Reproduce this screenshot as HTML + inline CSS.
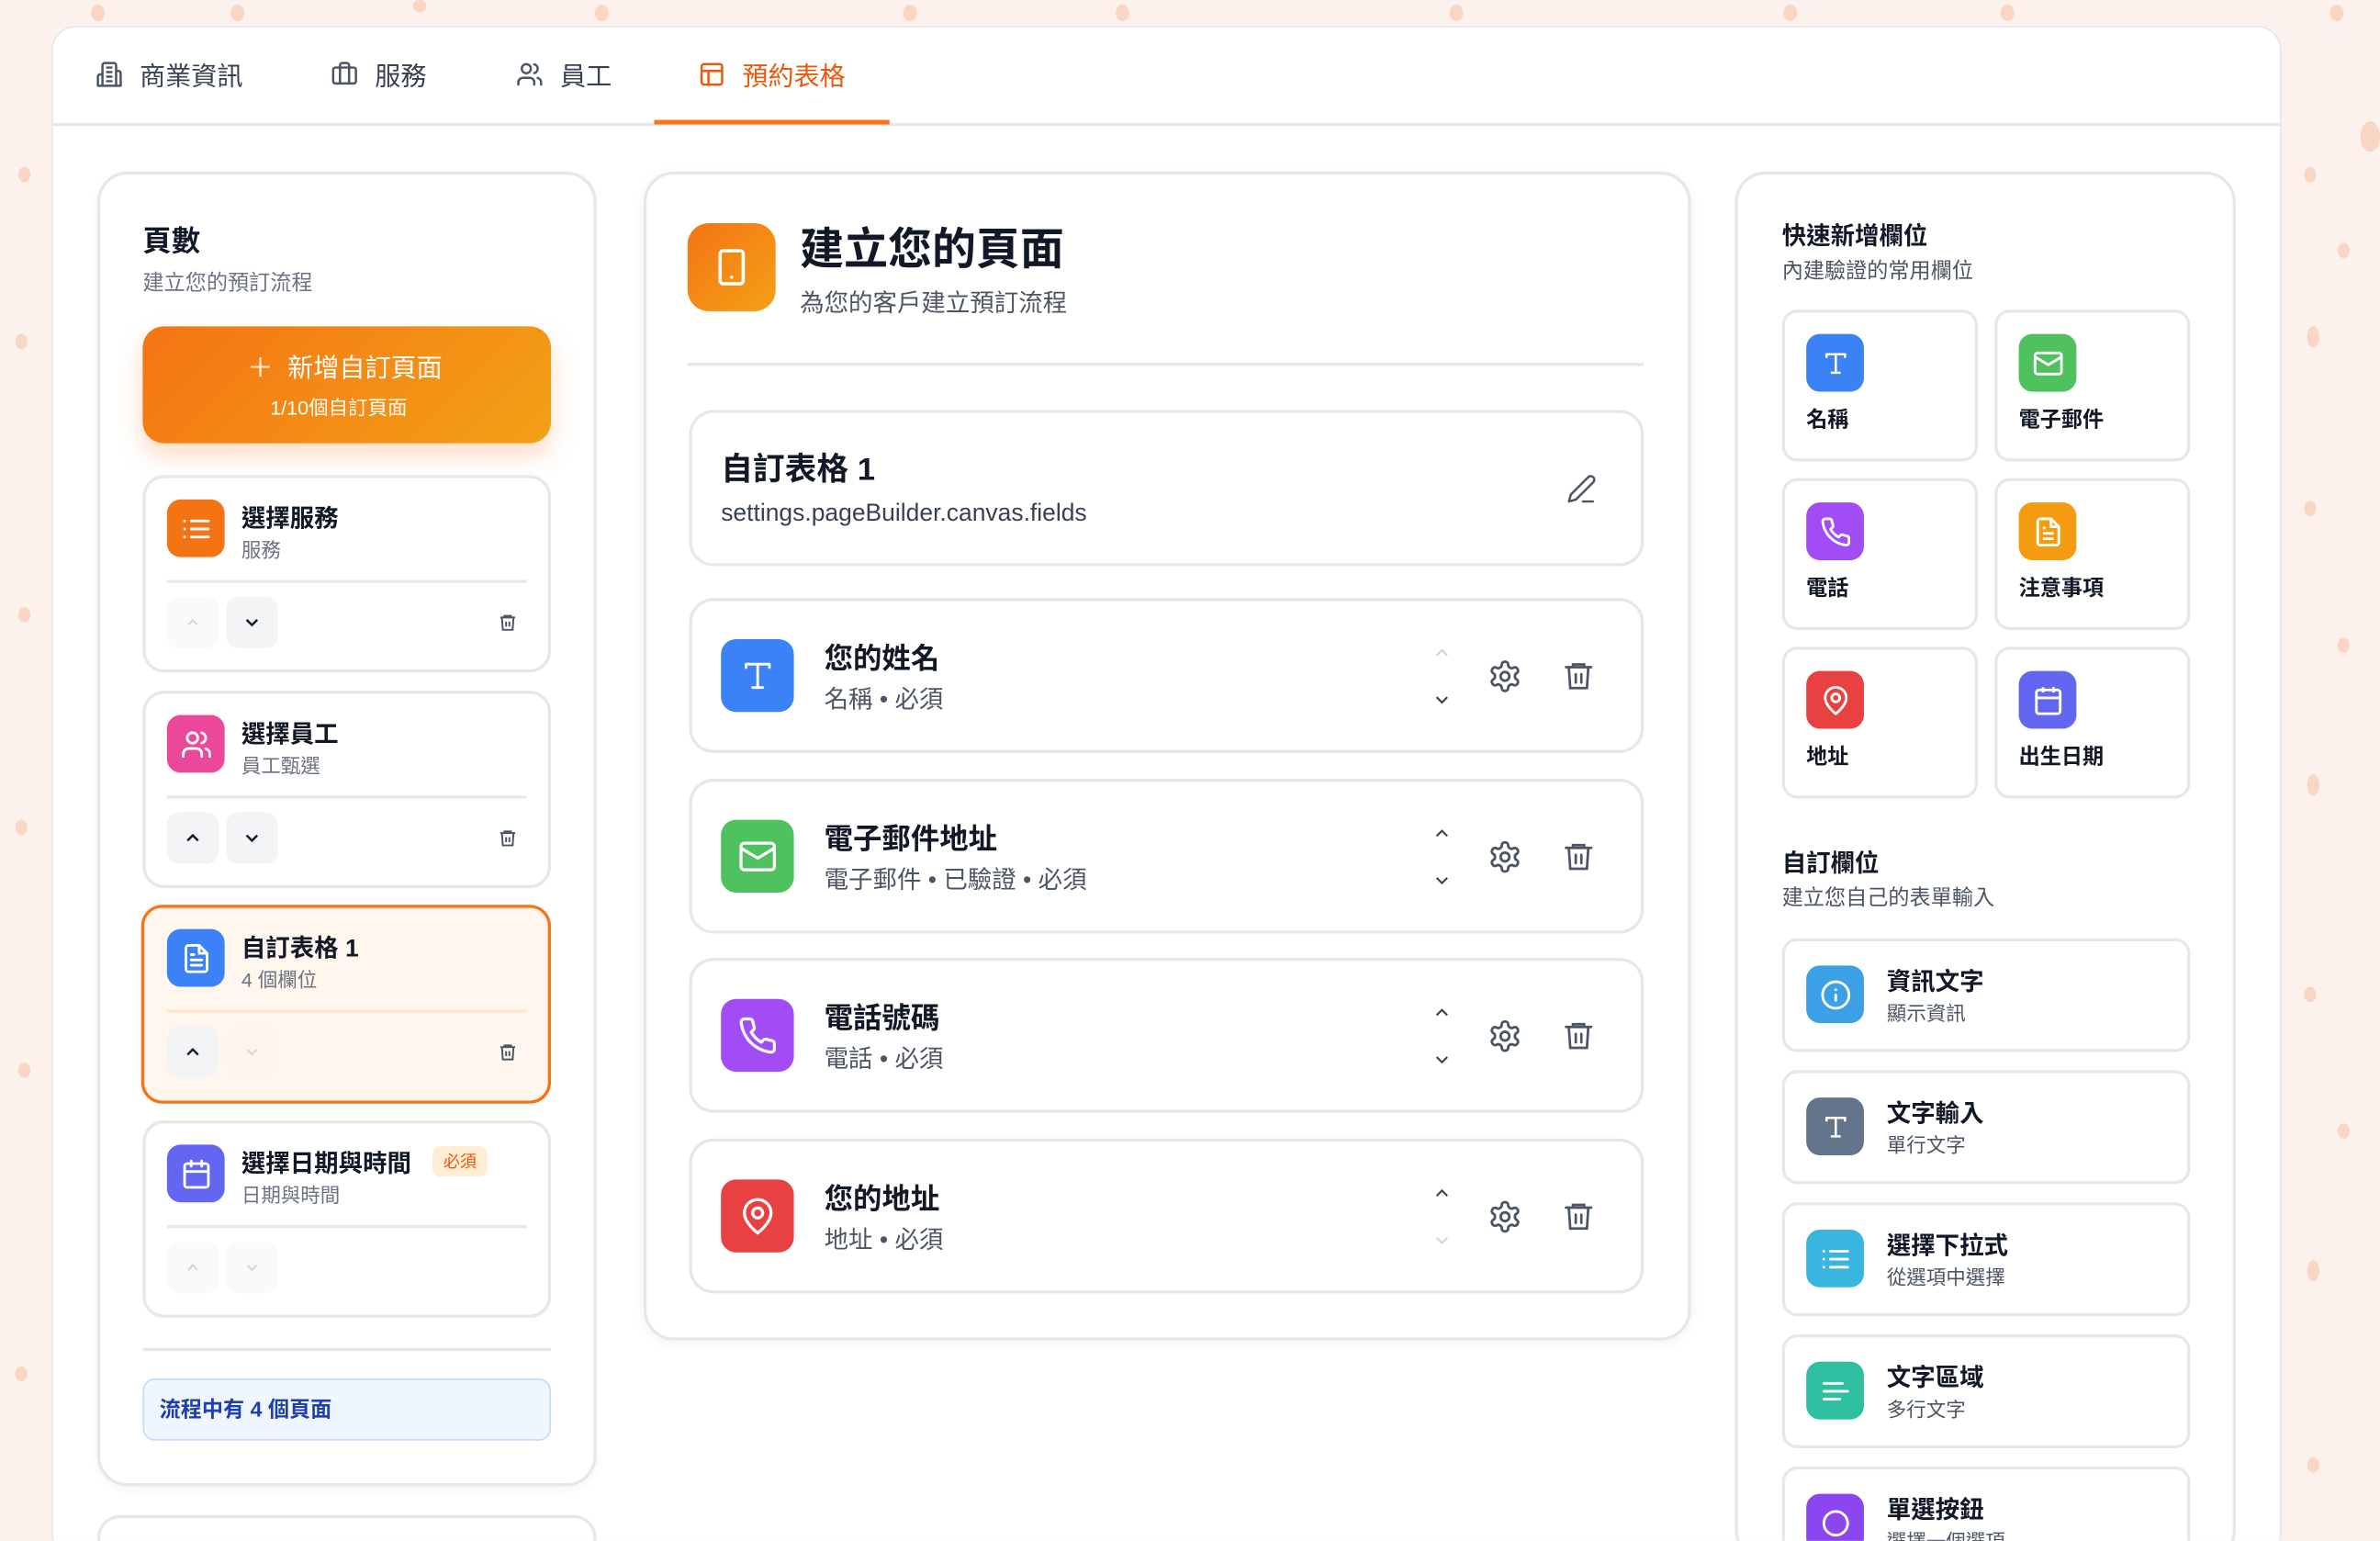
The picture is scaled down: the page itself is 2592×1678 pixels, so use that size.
<!DOCTYPE html>
<html><head><meta charset="utf-8">
<style>
*{box-sizing:border-box;margin:0;padding:0}
html,body{width:2592px;height:1678px;overflow:hidden;background:#fdf1ee}
body{font-family:"Liberation Sans","Noto Sans CJK TC",sans-serif;color:#111827}
#w{position:absolute;left:0;top:0;width:1568px;height:1015px;transform:scale(1.65306);transform-origin:0 0;overflow:hidden;background:#fdf1ee}
.a{position:absolute}
.dot{position:absolute;border-radius:50%;background:#f6c9b0;opacity:.7}
.card{position:absolute;background:#fff;border:2px solid #e5e7eb;border-radius:16px}
.ic{position:absolute;border-radius:9px;display:flex;align-items:center;justify-content:center}
.ic svg{width:55%;height:55%}
.t{position:absolute;white-space:nowrap;margin-top:-2px}
.b{font-weight:bold}
.g{color:#6b7280}
.sb{position:absolute;width:34px;height:34px;border-radius:8px;background:#f3f4f6;display:flex;align-items:center;justify-content:center}
</style></head><body><div id="w">
<div class="dot" style="left:60px;top:3px;width:9px;height:11px"></div>
<div class="dot" style="left:152px;top:3px;width:9px;height:11px"></div>
<div class="dot" style="left:272px;top:0px;width:9px;height:8px"></div>
<div class="dot" style="left:392px;top:3px;width:9px;height:11px"></div>
<div class="dot" style="left:595px;top:3px;width:9px;height:11px"></div>
<div class="dot" style="left:735px;top:3px;width:9px;height:11px"></div>
<div class="dot" style="left:955px;top:3px;width:9px;height:11px"></div>
<div class="dot" style="left:1175px;top:3px;width:9px;height:11px"></div>
<div class="dot" style="left:1318px;top:3px;width:9px;height:11px"></div>
<div class="dot" style="left:1535px;top:3px;width:9px;height:11px"></div>
<div class="dot" style="left:12px;top:110px;width:8px;height:10px"></div>
<div class="dot" style="left:10px;top:220px;width:8px;height:10px"></div>
<div class="dot" style="left:12px;top:400px;width:8px;height:10px"></div>
<div class="dot" style="left:10px;top:540px;width:8px;height:10px"></div>
<div class="dot" style="left:12px;top:700px;width:8px;height:10px"></div>
<div class="dot" style="left:10px;top:900px;width:8px;height:10px"></div>
<div class="dot" style="left:1518px;top:110px;width:8px;height:10px"></div>
<div class="dot" style="left:1520px;top:215px;width:8px;height:14px"></div>
<div class="dot" style="left:1540px;top:160px;width:8px;height:10px"></div>
<div class="dot" style="left:1555px;top:80px;width:13px;height:20px"></div>
<div class="dot" style="left:1518px;top:330px;width:8px;height:10px"></div>
<div class="dot" style="left:1520px;top:510px;width:8px;height:14px"></div>
<div class="dot" style="left:1540px;top:420px;width:8px;height:10px"></div>
<div class="dot" style="left:1518px;top:650px;width:8px;height:10px"></div>
<div class="dot" style="left:1520px;top:830px;width:8px;height:14px"></div>
<div class="dot" style="left:1540px;top:740px;width:8px;height:10px"></div>
<div class="dot" style="left:1520px;top:960px;width:8px;height:10px"></div>

<div class="a" style="left:34px;top:17px;width:1469px;height:1010px;background:#fff;border:1.5px solid #e5e7eb;border-radius:16px"></div>
<div class="a" style="left:35px;top:81px;width:1467px;height:1.5px;background:#e5e7eb"></div>
<svg class="a" style="left:63px;top:40px" width="18" height="18" viewBox="0 0 24 24" fill="none" stroke="#4b5563" stroke-width="2" stroke-linecap="round" stroke-linejoin="round"><path d="M6 22V4a2 2 0 0 1 2-2h8a2 2 0 0 1 2 2v18z"/><path d="M6 12H4a2 2 0 0 0-2 2v8h4M18 9h2a2 2 0 0 1 2 2v11h-4M10 6h4M10 10h4M10 14h4M10 18h4"/></svg>
<div class="t" style="left:92px;top:38px;font-size:17px;color:#374151">商業資訊</div>
<svg class="a" style="left:218px;top:40px" width="18" height="18" viewBox="0 0 24 24" fill="none" stroke="#4b5563" stroke-width="2" stroke-linecap="round" stroke-linejoin="round"><path d="M16 20V4a2 2 0 0 0-2-2h-4a2 2 0 0 0-2 2v16"/><rect x="2" y="6" width="20" height="14" rx="2"/></svg>
<div class="t" style="left:247px;top:38px;font-size:17px;color:#374151">服務</div>
<svg class="a" style="left:340px;top:40px" width="18" height="18" viewBox="0 0 24 24" fill="none" stroke="#4b5563" stroke-width="2" stroke-linecap="round" stroke-linejoin="round"><path d="M16 21v-2a4 4 0 0 0-4-4H6a4 4 0 0 0-4 4v2"/><circle cx="9" cy="7" r="4"/><path d="M22 21v-2a4 4 0 0 0-3-3.87M16 3.13a4 4 0 0 1 0 7.75"/></svg>
<div class="t" style="left:369px;top:38px;font-size:17px;color:#374151">員工</div>
<svg class="a" style="left:460px;top:40px" width="18" height="18" viewBox="0 0 24 24" fill="none" stroke="#ea580c" stroke-width="2" stroke-linecap="round" stroke-linejoin="round"><rect x="3" y="3" width="18" height="18" rx="2"/><path d="M3 9h18M9 21V9"/></svg>
<div class="t" style="left:489px;top:38px;font-size:17px;color:#ea580c">預約表格</div>
<div class="a" style="left:431px;top:79px;width:155px;height:3px;background:#f97316"></div>

<div class="card" style="left:64px;top:113px;width:329px;height:866px;border-radius:20px;box-shadow:0 2px 6px rgba(0,0,0,.04)"></div>
<div class="card" style="left:64px;top:998px;width:329px;height:30px;border-radius:20px"></div>
<div class="t b" style="left:94px;top:146px;font-size:19px">頁數</div>
<div class="t g" style="left:94px;top:178px;font-size:14px">建立您的預訂流程</div>
<div class="a" style="left:94px;top:215px;width:269px;height:77px;border-radius:14px;background:linear-gradient(135deg,#f47414,#f3a116);box-shadow:0 8px 16px rgba(249,115,22,.25)"></div>
<div class="t" style="left:163px;top:230px;font-size:17px;color:#fff">＋&nbsp;&nbsp;新增自訂頁面</div>
<div class="t" style="left:178px;top:260px;font-size:13px;color:#fff">1/10個自訂頁面</div>

<div class="card" style="left:94px;top:313px;width:269px;height:130px;border-radius:14px"></div>
<div class="ic" style="left:110px;top:329px;width:38px;height:38px;background:#f47414"><svg viewBox="0 0 24 24" fill="none" stroke="#fff" stroke-width="2" stroke-linecap="round"><path d="M8 6h13M8 12h13M8 18h13M3 6h.01M3 12h.01M3 18h.01"/></svg></div>
<div class="t b" style="left:159px;top:330px;font-size:16px">選擇服務</div>
<div class="t g" style="left:159px;top:354px;font-size:13px">服務</div>
<div class="a" style="left:110px;top:382px;width:237px;height:1.5px;background:#e5e7eb"></div>
<div class="sb" style="left:110px;top:393px;background:#f9fafb"><svg width="12" height="12" viewBox="0 0 24 24" fill="none" stroke="#d1d5db" stroke-width="2.5"><path d="M6 15l6-6 6 6"/></svg></div>
<div class="sb" style="left:149px;top:393px"><svg width="14" height="14" viewBox="0 0 24 24" fill="none" stroke="#111827" stroke-width="2.5"><path d="M6 9l6 6 6-6"/></svg></div>
<svg class="a" style="left:328px;top:403px" width="13" height="14" viewBox="0 0 24 24" fill="none" stroke="#4b5563" stroke-width="2.2"><path d="M3 6h18M8 6V4h8v2M19 6l-1 15H6L5 6M10 11v6M14 11v6"/></svg>

<div class="card" style="left:94px;top:455px;width:269px;height:130px;border-radius:14px"></div>
<div class="ic" style="left:110px;top:471px;width:38px;height:38px;background:#ec4899"><svg viewBox="0 0 24 24" fill="none" stroke="#fff" stroke-width="2" stroke-linecap="round"><path d="M16 21v-2a4 4 0 0 0-4-4H6a4 4 0 0 0-4 4v2"/><circle cx="9" cy="7" r="4"/><path d="M22 21v-2a4 4 0 0 0-3-3.87M16 3.13a4 4 0 0 1 0 7.75"/></svg></div>
<div class="t b" style="left:159px;top:472px;font-size:16px">選擇員工</div>
<div class="t g" style="left:159px;top:496px;font-size:13px">員工甄選</div>
<div class="a" style="left:110px;top:524px;width:237px;height:1.5px;background:#e5e7eb"></div>
<div class="sb" style="left:110px;top:535px"><svg width="14" height="14" viewBox="0 0 24 24" fill="none" stroke="#111827" stroke-width="2.5"><path d="M6 15l6-6 6 6"/></svg></div>
<div class="sb" style="left:149px;top:535px"><svg width="14" height="14" viewBox="0 0 24 24" fill="none" stroke="#111827" stroke-width="2.5"><path d="M6 9l6 6 6-6"/></svg></div>
<svg class="a" style="left:328px;top:545px" width="13" height="14" viewBox="0 0 24 24" fill="none" stroke="#4b5563" stroke-width="2.2"><path d="M3 6h18M8 6V4h8v2M19 6l-1 15H6L5 6M10 11v6M14 11v6"/></svg>

<div class="a" style="left:93px;top:596px;width:270px;height:131px;border-radius:14px;border:2.5px solid #f97316;background:#fff7ed"></div>
<div class="ic" style="left:110px;top:612px;width:38px;height:38px;background:#3b82f6"><svg viewBox="0 0 24 24" fill="none" stroke="#fff" stroke-width="2" stroke-linecap="round" stroke-linejoin="round"><path d="M14 2H6a2 2 0 0 0-2 2v16a2 2 0 0 0 2 2h12a2 2 0 0 0 2-2V8z"/><path d="M14 2v6h6M16 13H8M16 17H8M10 9H8"/></svg></div>
<div class="t b" style="left:159px;top:613px;font-size:16px">自訂表格 1</div>
<div class="t g" style="left:159px;top:637px;font-size:13px">4 個欄位</div>
<div class="a" style="left:110px;top:665px;width:237px;height:1.5px;background:#fde4cf"></div>
<div class="sb" style="left:110px;top:676px"><svg width="14" height="14" viewBox="0 0 24 24" fill="none" stroke="#111827" stroke-width="2.5"><path d="M6 15l6-6 6 6"/></svg></div>
<div class="sb" style="left:149px;top:676px;background:#fdf4ec"><svg width="12" height="12" viewBox="0 0 24 24" fill="none" stroke="#d1d5db" stroke-width="2.5"><path d="M6 9l6 6 6-6"/></svg></div>
<svg class="a" style="left:328px;top:686px" width="13" height="14" viewBox="0 0 24 24" fill="none" stroke="#4b5563" stroke-width="2.2"><path d="M3 6h18M8 6V4h8v2M19 6l-1 15H6L5 6M10 11v6M14 11v6"/></svg>

<div class="card" style="left:94px;top:738px;width:269px;height:130px;border-radius:14px"></div>
<div class="ic" style="left:110px;top:754px;width:38px;height:38px;background:#6366f1"><svg viewBox="0 0 24 24" fill="none" stroke="#fff" stroke-width="2" stroke-linecap="round"><rect x="3" y="4" width="18" height="18" rx="2"/><path d="M16 2v4M8 2v4M3 10h18"/></svg></div>
<div class="t b" style="left:159px;top:755px;font-size:16px">選擇日期與時間</div>
<div class="t" style="left:285px;top:757px;font-size:11px;color:#ea580c;background:#ffedd5;border-radius:5px;padding:2px 7px">必須</div>
<div class="t g" style="left:159px;top:779px;font-size:13px">日期與時間</div>
<div class="a" style="left:110px;top:807px;width:237px;height:1.5px;background:#e5e7eb"></div>
<div class="sb" style="left:110px;top:818px;background:#f9fafb"><svg width="12" height="12" viewBox="0 0 24 24" fill="none" stroke="#d1d5db" stroke-width="2.5"><path d="M6 15l6-6 6 6"/></svg></div>
<div class="sb" style="left:149px;top:818px;background:#f9fafb"><svg width="12" height="12" viewBox="0 0 24 24" fill="none" stroke="#d1d5db" stroke-width="2.5"><path d="M6 9l6 6 6-6"/></svg></div>

<div class="a" style="left:94px;top:888px;width:269px;height:1.5px;background:#e5e7eb"></div>
<div class="a" style="left:94px;top:908px;width:269px;height:41px;border-radius:8px;background:#eff6ff;border:1.5px solid #bfdbfe"></div>
<div class="t b" style="left:105px;top:920px;font-size:14px;color:#1e40af">流程中有 4 個頁面</div>

<div class="card" style="left:424px;top:113px;width:690px;height:770px;border-radius:20px;box-shadow:0 2px 8px rgba(0,0,0,.05)"></div>
<div class="ic" style="left:453px;top:147px;width:58px;height:58px;border-radius:14px;background:linear-gradient(135deg,#f47414,#f3a116)"><svg style="width:45%;height:45%" viewBox="0 0 24 24" fill="none" stroke="#fff" stroke-width="2" stroke-linecap="round"><rect x="5" y="2" width="14" height="20" rx="2"/><path d="M12 18h.01"/></svg></div>
<div class="t b" style="left:527px;top:143px;font-size:29px">建立您的頁面</div>
<div class="t" style="left:527px;top:188px;font-size:16px;color:#4b5563">為您的客戶建立預訂流程</div>
<div class="a" style="left:453px;top:239px;width:630px;height:1.5px;background:#e5e7eb"></div>

<div class="card" style="left:454px;top:270px;width:629px;height:103px;border-width:2.5px"></div>
<div class="t b" style="left:475px;top:295px;font-size:21px">自訂表格 1</div>
<div class="t" style="left:475px;top:332px;font-size:16px;color:#374151">settings.pageBuilder.canvas.fields</div>
<svg class="a" style="left:1032px;top:312px" width="20" height="20" viewBox="0 0 24 24" fill="none" stroke="#4b5563" stroke-width="1.8" stroke-linecap="round" stroke-linejoin="round"><path d="M17 3a2.85 2.83 0 1 1 4 4L7.5 20.5 2 22l1.5-5.5z"/><path d="M13 22h8"/></svg>

<div class="card" style="left:454px;top:394px;width:629px;height:102px;border-width:2.5px"></div>
<div class="ic" style="left:475px;top:421px;width:48px;height:48px;border-radius:10px;background:#3b82f6"><svg viewBox="0 0 24 24" fill="none" stroke="#fff" stroke-width="1.6" stroke-linecap="round"><path d="M5 5h14M12 5v14M9 19h6M5 5v2M19 5v2"/></svg></div>
<div class="t b" style="left:543px;top:421px;font-size:19px">您的姓名</div>
<div class="t" style="left:543px;top:449px;font-size:16px;color:#4b5563">名稱 • 必須</div>
<svg class="a" style="left:943px;top:423px" width="14" height="14" viewBox="0 0 24 24" fill="none" stroke="#d1d5db" stroke-width="2.2"><path d="M6 15l6-6 6 6"/></svg>
<svg class="a" style="left:943px;top:454px" width="14" height="14" viewBox="0 0 24 24" fill="none" stroke="#374151" stroke-width="2.2"><path d="M6 9l6 6 6-6"/></svg>
<svg class="a" style="left:980px;top:434px" width="23" height="23" viewBox="0 0 24 24" fill="none" stroke="#4b5563" stroke-width="1.8"><path d="M12.22 2h-.44a2 2 0 0 0-2 2v.18a2 2 0 0 1-1 1.73l-.43.25a2 2 0 0 1-2 0l-.15-.08a2 2 0 0 0-2.73.73l-.22.38a2 2 0 0 0 .73 2.73l.15.1a2 2 0 0 1 1 1.72v.51a2 2 0 0 1-1 1.74l-.15.09a2 2 0 0 0-.73 2.73l.22.38a2 2 0 0 0 2.73.73l.15-.08a2 2 0 0 1 2 0l.43.25a2 2 0 0 1 1 1.73V20a2 2 0 0 0 2 2h.44a2 2 0 0 0 2-2v-.18a2 2 0 0 1 1-1.73l.43-.25a2 2 0 0 1 2 0l.15.08a2 2 0 0 0 2.73-.73l.22-.39a2 2 0 0 0-.73-2.73l-.15-.08a2 2 0 0 1-1-1.74v-.5a2 2 0 0 1 1-1.74l.15-.09a2 2 0 0 0 .73-2.73l-.22-.38a2 2 0 0 0-2.73-.73l-.15.08a2 2 0 0 1-2 0l-.43-.25a2 2 0 0 1-1-1.73V4a2 2 0 0 0-2-2z"/><circle cx="12" cy="12" r="3"/></svg>
<svg class="a" style="left:1029px;top:433px" width="22" height="24" viewBox="0 0 24 24" fill="none" stroke="#4b5563" stroke-width="1.8" stroke-linecap="round"><path d="M3 6h18M8 6V4h8v2M19 6l-1 15H6L5 6M10 11v6M14 11v6"/></svg>

<div class="card" style="left:454px;top:513px;width:629px;height:102px;border-width:2.5px"></div>
<div class="ic" style="left:475px;top:540px;width:48px;height:48px;border-radius:10px;background:#4fc25f"><svg viewBox="0 0 24 24" fill="none" stroke="#fff" stroke-width="1.8"><rect x="2" y="4" width="20" height="16" rx="2"/><path d="M22 7l-10 6L2 7"/></svg></div>
<div class="t b" style="left:543px;top:540px;font-size:19px">電子郵件地址</div>
<div class="t" style="left:543px;top:568px;font-size:16px;color:#4b5563">電子郵件 • 已驗證 • 必須</div>
<svg class="a" style="left:943px;top:542px" width="14" height="14" viewBox="0 0 24 24" fill="none" stroke="#374151" stroke-width="2.2"><path d="M6 15l6-6 6 6"/></svg>
<svg class="a" style="left:943px;top:573px" width="14" height="14" viewBox="0 0 24 24" fill="none" stroke="#374151" stroke-width="2.2"><path d="M6 9l6 6 6-6"/></svg>
<svg class="a" style="left:980px;top:553px" width="23" height="23" viewBox="0 0 24 24" fill="none" stroke="#4b5563" stroke-width="1.8"><path d="M12.22 2h-.44a2 2 0 0 0-2 2v.18a2 2 0 0 1-1 1.73l-.43.25a2 2 0 0 1-2 0l-.15-.08a2 2 0 0 0-2.73.73l-.22.38a2 2 0 0 0 .73 2.73l.15.1a2 2 0 0 1 1 1.72v.51a2 2 0 0 1-1 1.74l-.15.09a2 2 0 0 0-.73 2.73l.22.38a2 2 0 0 0 2.73.73l.15-.08a2 2 0 0 1 2 0l.43.25a2 2 0 0 1 1 1.73V20a2 2 0 0 0 2 2h.44a2 2 0 0 0 2-2v-.18a2 2 0 0 1 1-1.73l.43-.25a2 2 0 0 1 2 0l.15.08a2 2 0 0 0 2.73-.73l.22-.39a2 2 0 0 0-.73-2.73l-.15-.08a2 2 0 0 1-1-1.74v-.5a2 2 0 0 1 1-1.74l.15-.09a2 2 0 0 0 .73-2.73l-.22-.38a2 2 0 0 0-2.73-.73l-.15.08a2 2 0 0 1-2 0l-.43-.25a2 2 0 0 1-1-1.73V4a2 2 0 0 0-2-2z"/><circle cx="12" cy="12" r="3"/></svg>
<svg class="a" style="left:1029px;top:552px" width="22" height="24" viewBox="0 0 24 24" fill="none" stroke="#4b5563" stroke-width="1.8" stroke-linecap="round"><path d="M3 6h18M8 6V4h8v2M19 6l-1 15H6L5 6M10 11v6M14 11v6"/></svg>

<div class="card" style="left:454px;top:631px;width:629px;height:102px;border-width:2.5px"></div>
<div class="ic" style="left:475px;top:658px;width:48px;height:48px;border-radius:10px;background:#a24cf5"><svg viewBox="0 0 24 24" fill="none" stroke="#fff" stroke-width="1.8" stroke-linejoin="round"><path d="M22 16.92v3a2 2 0 0 1-2.18 2 19.79 19.79 0 0 1-8.63-3.07 19.5 19.5 0 0 1-6-6A19.79 19.790 0 0 1 2.12 4.18 2 2 0 0 1 4.11 2h3a2 2 0 0 1 2 1.72c.13.96.36 1.9.7 2.81a2 2 0 0 1-.45 2.11L8.09 9.91a16 16 0 0 0 6 6l1.27-1.27a2 2 0 0 1 2.11-.45c.91.34 1.85.57 2.81.7A2 2 0 0 1 22 16.92z"/></svg></div>
<div class="t b" style="left:543px;top:658px;font-size:19px">電話號碼</div>
<div class="t" style="left:543px;top:686px;font-size:16px;color:#4b5563">電話 • 必須</div>
<svg class="a" style="left:943px;top:660px" width="14" height="14" viewBox="0 0 24 24" fill="none" stroke="#374151" stroke-width="2.2"><path d="M6 15l6-6 6 6"/></svg>
<svg class="a" style="left:943px;top:691px" width="14" height="14" viewBox="0 0 24 24" fill="none" stroke="#374151" stroke-width="2.2"><path d="M6 9l6 6 6-6"/></svg>
<svg class="a" style="left:980px;top:671px" width="23" height="23" viewBox="0 0 24 24" fill="none" stroke="#4b5563" stroke-width="1.8"><path d="M12.22 2h-.44a2 2 0 0 0-2 2v.18a2 2 0 0 1-1 1.73l-.43.25a2 2 0 0 1-2 0l-.15-.08a2 2 0 0 0-2.73.73l-.22.38a2 2 0 0 0 .73 2.73l.15.1a2 2 0 0 1 1 1.72v.51a2 2 0 0 1-1 1.74l-.15.09a2 2 0 0 0-.73 2.73l.22.38a2 2 0 0 0 2.73.73l.15-.08a2 2 0 0 1 2 0l.43.25a2 2 0 0 1 1 1.73V20a2 2 0 0 0 2 2h.44a2 2 0 0 0 2-2v-.18a2 2 0 0 1 1-1.73l.43-.25a2 2 0 0 1 2 0l.15.08a2 2 0 0 0 2.73-.73l.22-.39a2 2 0 0 0-.73-2.73l-.15-.08a2 2 0 0 1-1-1.74v-.5a2 2 0 0 1 1-1.74l.15-.09a2 2 0 0 0 .73-2.73l-.22-.38a2 2 0 0 0-2.73-.73l-.15.08a2 2 0 0 1-2 0l-.43-.25a2 2 0 0 1-1-1.73V4a2 2 0 0 0-2-2z"/><circle cx="12" cy="12" r="3"/></svg>
<svg class="a" style="left:1029px;top:670px" width="22" height="24" viewBox="0 0 24 24" fill="none" stroke="#4b5563" stroke-width="1.8" stroke-linecap="round"><path d="M3 6h18M8 6V4h8v2M19 6l-1 15H6L5 6M10 11v6M14 11v6"/></svg>

<div class="card" style="left:454px;top:750px;width:629px;height:102px;border-width:2.5px"></div>
<div class="ic" style="left:475px;top:777px;width:48px;height:48px;border-radius:10px;background:#e84141"><svg viewBox="0 0 24 24" fill="none" stroke="#fff" stroke-width="1.8"><path d="M20 10c0 6-8 12-8 12s-8-6-8-12a8 8 0 0 1 16 0z"/><circle cx="12" cy="10" r="3"/></svg></div>
<div class="t b" style="left:543px;top:777px;font-size:19px">您的地址</div>
<div class="t" style="left:543px;top:805px;font-size:16px;color:#4b5563">地址 • 必須</div>
<svg class="a" style="left:943px;top:779px" width="14" height="14" viewBox="0 0 24 24" fill="none" stroke="#374151" stroke-width="2.2"><path d="M6 15l6-6 6 6"/></svg>
<svg class="a" style="left:943px;top:810px" width="14" height="14" viewBox="0 0 24 24" fill="none" stroke="#d1d5db" stroke-width="2.2"><path d="M6 9l6 6 6-6"/></svg>
<svg class="a" style="left:980px;top:790px" width="23" height="23" viewBox="0 0 24 24" fill="none" stroke="#4b5563" stroke-width="1.8"><path d="M12.22 2h-.44a2 2 0 0 0-2 2v.18a2 2 0 0 1-1 1.73l-.43.25a2 2 0 0 1-2 0l-.15-.08a2 2 0 0 0-2.73.73l-.22.38a2 2 0 0 0 .73 2.73l.15.1a2 2 0 0 1 1 1.72v.51a2 2 0 0 1-1 1.74l-.15.09a2 2 0 0 0-.73 2.73l.22.38a2 2 0 0 0 2.73.73l.15-.08a2 2 0 0 1 2 0l.43.25a2 2 0 0 1 1 1.73V20a2 2 0 0 0 2 2h.44a2 2 0 0 0 2-2v-.18a2 2 0 0 1 1-1.73l.43-.25a2 2 0 0 1 2 0l.15.08a2 2 0 0 0 2.73-.73l.22-.39a2 2 0 0 0-.73-2.73l-.15-.08a2 2 0 0 1-1-1.74v-.5a2 2 0 0 1 1-1.74l.15-.09a2 2 0 0 0 .73-2.73l-.22-.38a2 2 0 0 0-2.73-.73l-.15.08a2 2 0 0 1-2 0l-.43-.25a2 2 0 0 1-1-1.73V4a2 2 0 0 0-2-2z"/><circle cx="12" cy="12" r="3"/></svg>
<svg class="a" style="left:1029px;top:789px" width="22" height="24" viewBox="0 0 24 24" fill="none" stroke="#4b5563" stroke-width="1.8" stroke-linecap="round"><path d="M3 6h18M8 6V4h8v2M19 6l-1 15H6L5 6M10 11v6M14 11v6"/></svg>

<div class="card" style="left:1143px;top:113px;width:330px;height:915px;border-radius:20px"></div>
<div class="t b" style="left:1174px;top:144px;font-size:16px">快速新增欄位</div>
<div class="t g" style="left:1174px;top:170px;font-size:14px;color:#4b5563">內建驗證的常用欄位</div>

<div class="card" style="left:1174px;top:204px;width:129px;height:100px;border-radius:10px"></div>
<div class="ic" style="left:1190px;top:220px;width:38px;height:38px;background:#3b82f6"><svg viewBox="0 0 24 24" fill="none" stroke="#fff" stroke-width="1.8" stroke-linecap="round"><path d="M5 5h14M12 5v14M9 19h6M5 5v2M19 5v2"/></svg></div>
<div class="t b" style="left:1190px;top:268px;font-size:14px">名稱</div>
<div class="card" style="left:1314px;top:204px;width:129px;height:100px;border-radius:10px"></div>
<div class="ic" style="left:1330px;top:220px;width:38px;height:38px;background:#4fc25f"><svg viewBox="0 0 24 24" fill="none" stroke="#fff" stroke-width="2"><rect x="2" y="4" width="20" height="16" rx="2"/><path d="M22 7l-10 6L2 7"/></svg></div>
<div class="t b" style="left:1330px;top:268px;font-size:14px">電子郵件</div>

<div class="card" style="left:1174px;top:315px;width:129px;height:100px;border-radius:10px"></div>
<div class="ic" style="left:1190px;top:331px;width:38px;height:38px;background:#a24cf5"><svg viewBox="0 0 24 24" fill="none" stroke="#fff" stroke-width="2" stroke-linejoin="round"><path d="M22 16.92v3a2 2 0 0 1-2.18 2 19.79 19.79 0 0 1-8.63-3.07 19.5 19.5 0 0 1-6-6A19.79 19.79 0 0 1 2.12 4.18 2 2 0 0 1 4.11 2h3a2 2 0 0 1 2 1.72c.13.96.36 1.9.7 2.81a2 2 0 0 1-.45 2.11L8.09 9.91a16 16 0 0 0 6 6l1.27-1.27a2 2 0 0 1 2.11-.45c.91.34 1.85.57 2.81.7A2 2 0 0 1 22 16.92z"/></svg></div>
<div class="t b" style="left:1190px;top:379px;font-size:14px">電話</div>
<div class="card" style="left:1314px;top:315px;width:129px;height:100px;border-radius:10px"></div>
<div class="ic" style="left:1330px;top:331px;width:38px;height:38px;background:#f39c12"><svg viewBox="0 0 24 24" fill="none" stroke="#fff" stroke-width="2" stroke-linejoin="round"><path d="M14 2H6a2 2 0 0 0-2 2v16a2 2 0 0 0 2 2h12a2 2 0 0 0 2-2V8z"/><path d="M14 2v6h6M16 13H8M16 17H8M10 9H8"/></svg></div>
<div class="t b" style="left:1330px;top:379px;font-size:14px">注意事項</div>

<div class="card" style="left:1174px;top:426px;width:129px;height:100px;border-radius:10px"></div>
<div class="ic" style="left:1190px;top:442px;width:38px;height:38px;background:#e84141"><svg viewBox="0 0 24 24" fill="none" stroke="#fff" stroke-width="2"><path d="M20 10c0 6-8 12-8 12s-8-6-8-12a8 8 0 0 1 16 0z"/><circle cx="12" cy="10" r="3"/></svg></div>
<div class="t b" style="left:1190px;top:490px;font-size:14px">地址</div>
<div class="card" style="left:1314px;top:426px;width:129px;height:100px;border-radius:10px"></div>
<div class="ic" style="left:1330px;top:442px;width:38px;height:38px;background:#6366f1"><svg viewBox="0 0 24 24" fill="none" stroke="#fff" stroke-width="2"><rect x="3" y="4" width="18" height="18" rx="2"/><path d="M16 2v4M8 2v4M3 10h18"/></svg></div>
<div class="t b" style="left:1330px;top:490px;font-size:14px">出生日期</div>

<div class="t b" style="left:1174px;top:557px;font-size:16px">自訂欄位</div>
<div class="t" style="left:1174px;top:583px;font-size:14px;color:#4b5563">建立您自己的表單輸入</div>

<div class="card" style="left:1174px;top:618px;width:269px;height:75px;border-radius:10px"></div>
<div class="ic" style="left:1190px;top:636px;width:38px;height:38px;background:#3ba0e6"><svg viewBox="0 0 24 24" fill="none" stroke="#fff" stroke-width="2" stroke-linecap="round"><circle cx="12" cy="12" r="10"/><path d="M12 16v-4M12 8h.01"/></svg></div>
<div class="t b" style="left:1243px;top:635px;font-size:16px">資訊文字</div>
<div class="t" style="left:1243px;top:659px;font-size:13px;color:#4b5563">顯示資訊</div>

<div class="card" style="left:1174px;top:705px;width:269px;height:75px;border-radius:10px"></div>
<div class="ic" style="left:1190px;top:723px;width:38px;height:38px;background:#64748b"><svg viewBox="0 0 24 24" fill="none" stroke="#fff" stroke-width="1.8" stroke-linecap="round"><path d="M5 5h14M12 5v14M9 19h6M5 5v2M19 5v2"/></svg></div>
<div class="t b" style="left:1243px;top:722px;font-size:16px">文字輸入</div>
<div class="t" style="left:1243px;top:746px;font-size:13px;color:#4b5563">單行文字</div>

<div class="card" style="left:1174px;top:792px;width:269px;height:75px;border-radius:10px"></div>
<div class="ic" style="left:1190px;top:810px;width:38px;height:38px;background:#38b6e0"><svg viewBox="0 0 24 24" fill="none" stroke="#fff" stroke-width="2" stroke-linecap="round"><path d="M8 6h13M8 12h13M8 18h13M3 6h.01M3 12h.01M3 18h.01"/></svg></div>
<div class="t b" style="left:1243px;top:809px;font-size:16px">選擇下拉式</div>
<div class="t" style="left:1243px;top:833px;font-size:13px;color:#4b5563">從選項中選擇</div>

<div class="card" style="left:1174px;top:879px;width:269px;height:75px;border-radius:10px"></div>
<div class="ic" style="left:1190px;top:897px;width:38px;height:38px;background:#2ebfa0"><svg viewBox="0 0 24 24" fill="none" stroke="#fff" stroke-width="2" stroke-linecap="round"><path d="M17 6H3M21 12H3M15 18H3"/></svg></div>
<div class="t b" style="left:1243px;top:896px;font-size:16px">文字區域</div>
<div class="t" style="left:1243px;top:920px;font-size:13px;color:#4b5563">多行文字</div>

<div class="card" style="left:1174px;top:966px;width:269px;height:60px;border-radius:10px"></div>
<div class="ic" style="left:1190px;top:984px;width:38px;height:38px;background:#8b46f0"><svg viewBox="0 0 24 24" fill="none" stroke="#fff" stroke-width="2"><circle cx="12" cy="12" r="9"/></svg></div>
<div class="t b" style="left:1243px;top:983px;font-size:16px">單選按鈕</div>
<div class="t" style="left:1243px;top:1007px;font-size:13px;color:#4b5563">選擇一個選項</div>
</div></body></html>
